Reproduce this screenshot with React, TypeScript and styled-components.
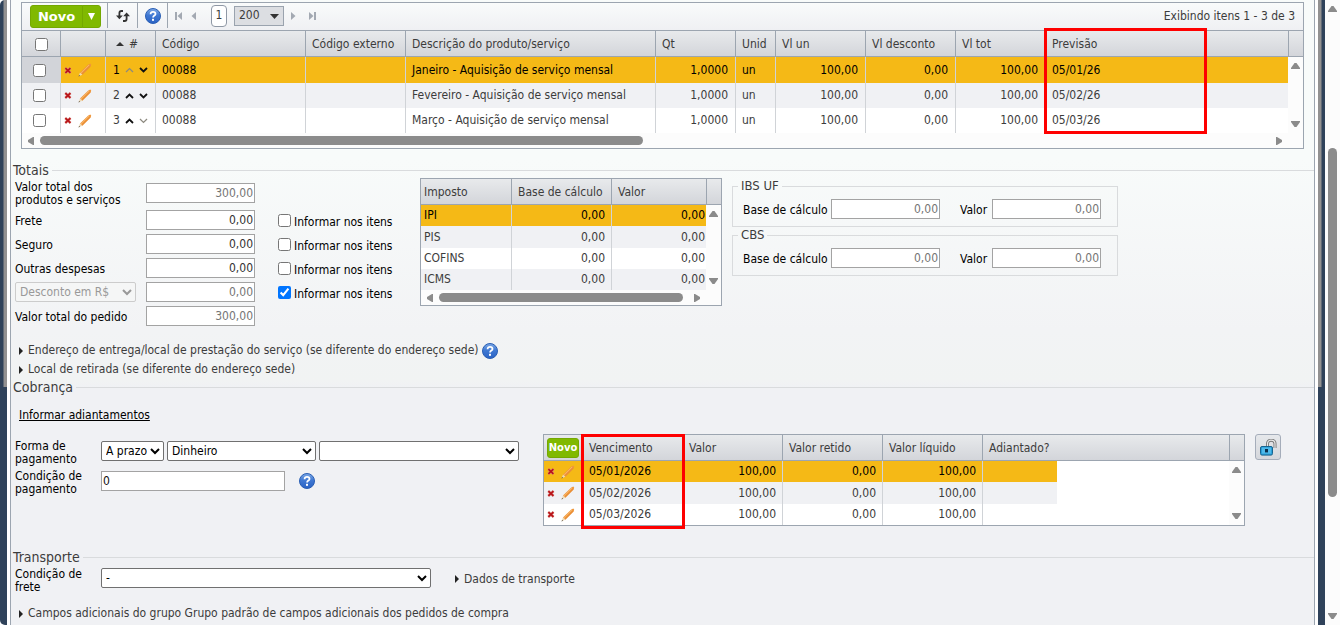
import React from 'react';
import styled, { createGlobalStyle } from 'styled-components';

const FONT = '"DejaVu Sans Condensed", "DejaVu Sans", Verdana, sans-serif';
const LINE = '#9ca5b0';
const AMBER = '#f5b916';
const TEXT = '#3c3c3c';

const Global = createGlobalStyle`
  *, *::before, *::after { box-sizing: border-box; }
  html, body { margin: 0; background: #fff; }
  body { overflow: hidden; font: 12px/13px ${FONT}; color: ${TEXT}; }
  input, select, button { font: inherit; margin: 0; }
`;

/* ---------- page frame ---------- */

const Page = styled.div`
  display: flex;
  min-height: 100vh;
`;

const Rail = styled.div<{ $side: 'left' | 'right' }>`
  flex: none;
  width: 7px;
  background: linear-gradient(to ${p => p.$side}, #929191 3px, transparent 4px) 0 0 / 100% 387px no-repeat, #2f425a;
  border-radius: ${p => (p.$side === 'left' ? '5px 0 0 5px' : '0')};
`;

const Sheet = styled.main`
  flex: 1;
  min-width: 0;
  margin: 0 3px;
  border: solid ${LINE};
  border-width: 0 1px;
  background: linear-gradient(#f8fbfa 160px, #f2f3f5 330px, #f1f3f3 380px, #f0f1f4 388px);
`;

const PageScroll = styled.div`
  flex: none;
  width: 15px;
  display: flex;
  flex-direction: column;
  align-items: center;
  padding: 6px 0;
  background: #fcfcfc;
`;

const PageThumb = styled.div`
  flex: none;
  width: 9px;
  height: 57%;
  margin: 136px 0 auto;
  border-radius: 5px;
  background: #8b8b8b;
`;

/* ---------- small drawings ---------- */

const Glyph = styled.svg`
  display: block;
  flex: none;
`;

const arrows = {
  up: '0,6 0,5 3.5,0 5.5,0 9,5 9,6',
  down: '0,0 9,0 9,1 5.5,6 3.5,6 0,1',
  left: '6,0 6,8 5,8 0,5 0,3 5,0',
  right: '0,0 1,0 6,3 6,5 1,8 0,8',
};

const Arrow = ({ dir }: { dir: keyof typeof arrows }) => {
  const vertical = dir === 'up' || dir === 'down';
  return (
    <Glyph width={vertical ? 9 : 6} height={vertical ? 6 : 8} aria-hidden="true">
      <polygon points={arrows[dir]} fill="#8b8b8b" />
    </Glyph>
  );
};

const HelpIcon = () => (
  <Glyph width="16" height="16" viewBox="0 0 16 16" aria-hidden="true">
    <defs>
      <linearGradient id="helpFill" x1="0" y1="0" x2="0" y2="1">
        <stop offset="0" stopColor="#7ea9e6" />
        <stop offset="0.45" stopColor="#4079d3" />
        <stop offset="1" stopColor="#2a62c4" />
      </linearGradient>
    </defs>
    <circle cx="8" cy="8" r="7.5" fill="url(#helpFill)" stroke="#2a5fb4" />
    <path d="M5.6 6.2C5.6 4.6 6.6 3.8 8 3.8s2.5.8 2.5 2.1c0 1.6-2.4 1.7-2.4 3.5" fill="none" stroke="#fff" strokeWidth="1.8" />
    <rect x="7" y="10.8" width="2" height="2" fill="#fff" />
  </Glyph>
);

const DeleteIcon = () => (
  <Glyph width="8" height="7" viewBox="0 0 8 7" aria-hidden="true">
    <path d="M1.2 1L6.6 6M6.6 1L1.2 6" stroke="#d9867c" strokeWidth="2.4" />
    <path d="M1.4 1.2L6.4 5.8M6.4 1.2L1.4 5.8" stroke="#b9141a" strokeWidth="1.6" />
  </Glyph>
);

const PencilIcon = () => (
  <Glyph width="14" height="14" viewBox="0 0 14 14" aria-hidden="true">
    <path d="M2 9.5L10.3 1.4 12.3 .6 13.2 1.4 12.6 3.4 4.4 11.8z" fill="#f0983c" />
    <path d="M2.9 10L11 2" stroke="#f8b468" strokeWidth="1" />
    <path d="M4 11.3L12.4 3" stroke="#df8330" strokeWidth=".7" />
    <path d="M2 9.5L.6 13.3 4.4 11.8z" fill="#ecd9b4" />
    <path d="M1.1 11.9L.5 13.4 2 12.8z" fill="#4a4136" />
  </Glyph>
);

const Chevron = ({ up, dim }: { up?: boolean; dim?: boolean }) => (
  <Glyph width="9" height="6" viewBox="0 0 9 6" aria-hidden="true">
    <path d={up ? 'M1 5L4.5 1.6 8 5' : 'M1 1L4.5 4.4 8 1'} fill="none" stroke={dim ? '#8d8a80' : '#111'} strokeWidth={dim ? 1.3 : 1.8} />
  </Glyph>
);

const RefreshIcon = () => (
  <Glyph width="14" height="12" viewBox="0 0 14 12" aria-hidden="true">
    <path d="M7 1H5.4Q3.4 1 3.4 3V6.5" fill="none" stroke="#333" strokeWidth="1.8" />
    <path d="M0 5.4H6.8L3.4 9.2z" fill="#333" />
    <path d="M7 11H8.6Q10.6 11 10.6 9V5" fill="none" stroke="#333" strokeWidth="1.8" />
    <path d="M7.2 6.2H14L10.6 2.4z" fill="#333" />
  </Glyph>
);

const PagerIcon = ({ next, edge }: { next?: boolean; edge?: boolean }) => (
  <Glyph width={edge ? 7 : 5} height="8" viewBox={edge ? '0 0 7 8' : '0 0 5 8'} aria-hidden="true">
    {edge && <rect x={next ? 5 : 0} y="0" width="2" height="8" fill="#a3a9b2" />}
    {next ? <path d="M0 0L4.5 4 0 8z" fill="#a3a9b2" /> : <path d={edge ? 'M7 0L2.5 4 7 8z' : 'M5 0L.5 4 5 8z'} fill="#a3a9b2" />}
  </Glyph>
);

const SortIcon = () => (
  <Glyph width="8" height="4" aria-hidden="true">
    <path d="M0 4L4 0 8 4z" fill="#333" />
  </Glyph>
);

const DisclosureIcon = () => (
  <Glyph width="4" height="8" aria-hidden="true">
    <path d="M0 0L4 4 0 8z" fill="#222" />
  </Glyph>
);

const UnlockIcon = () => (
  <Glyph width="17" height="17" viewBox="0 0 17 17" aria-hidden="true">
    <path d="M7.5 8V4.8C7.5 2.3 9 1.2 11 1.2s4 1.1 4 3.6V9" fill="none" stroke="#777" strokeWidth="3" />
    <path d="M7.5 8V4.8C7.5 2.3 9 1.2 11 1.2s4 1.1 4 3.6V9" fill="none" stroke="#e8e8e8" strokeWidth="1.2" />
    <rect x=".5" y="7.5" width="12" height="8.6" rx="1.5" fill="#2a9fd8" stroke="#17648f" />
    <rect x="2" y="8.6" width="9" height="6" fill="#4fb9ea" />
    <rect x="5" y="10" width="3" height="3.4" fill="#0b2f4c" />
  </Glyph>
);

/* ---------- buttons ---------- */

const IconButton = styled.button`
  display: inline-flex;
  align-items: center;
  justify-content: center;
  padding: 0;
  border: 0;
  background: none;
  color: inherit;
`;

const NewButton = styled.button<{ $small?: boolean }>`
  display: flex;
  align-items: center;
  justify-content: center;
  height: ${p => (p.$small ? 20 : 23)}px;
  width: ${p => (p.$small ? 32 : 53)}px;
  padding: 0;
  border: 1px solid #74a800;
  border-radius: ${p => (p.$small ? '3px' : '3px 0 0 3px')};
  background: #80b900;
  color: #fff;
  font: bold ${p => (p.$small ? 10 : 13)}px/16px "DejaVu Sans", Verdana, sans-serif;
`;

const NewMenuButton = styled(NewButton)`
  width: 19px;
  margin-left: -1px;
  border-radius: 0 3px 3px 0;
`;

const LockButton = styled(IconButton)`
  flex: none;
  width: 26px;
  height: 26px;
  margin-left: 10px;
  border: 1px solid #a5adba;
  border-radius: 3px;
  background: linear-gradient(#e6e8eb, #d5d7dc);
`;

/* ---------- grids ---------- */

const Panel = styled.section`
  border: 1px solid ${LINE};
  background: #fcfcfc;
`;

const ItemsPanel = styled(Panel)`
  position: relative;
  margin: 2px 10px 0;
`;

const TaxPanel = styled(Panel)`
  flex: 0 0 302px;
`;

const DuePanel = styled(Panel)`
  position: relative;
  flex: 0 1 702px;
  min-width: 0;
  margin-left: 24px;
`;

const Toolbar = styled.div`
  display: flex;
  align-items: center;
  height: 28px;
  padding: 0 8px;
  border-bottom: 1px solid ${LINE};
  background: linear-gradient(#f9fbfb, #eff0f3);
`;

const ToolSlot = styled.div`
  display: flex;
  align-items: center;
  justify-content: center;
  width: 30px;
  height: 25px;
  border-left: 1px solid ${LINE};
`;

const ToolSlots = styled.div`
  display: flex;
  align-self: flex-start;
  margin-left: 6px;
`;

const Pager = styled.nav`
  display: flex;
  align-items: center;
  align-self: flex-start;
  height: 25px;
  padding-left: 6px;
  border-left: 1px solid ${LINE};
`;

const PagerStep = styled(IconButton)`
  width: 19px;
  height: 16px;
  &:first-child { width: 8px; margin-right: 2px; }
`;

const PageNumber = styled.button`
  width: 16px;
  height: 22px;
  margin: 0 7px 0 8px;
  padding: 0;
  border: 1px solid #8f98a5;
  border-radius: 4px;
  background: #fff;
  color: ${TEXT};
`;

const SizeSelect = styled.select`
  appearance: none;
  width: 50px;
  height: 20px;
  padding: 0 4px;
  border: 1px solid #9aa3ae;
  border-radius: 0;
  background: #dcdee2;
  color: ${TEXT};
`;

const SizeBox = styled.div`
  position: relative;
  display: flex;
  svg { position: absolute; right: 5px; top: 8px; pointer-events: none; }
`;

const Count = styled.span`
  margin-left: auto;
`;

const GridBody = styled.div`
  display: flex;
`;

const Table = styled.table`
  flex: 1;
  width: 0;
  min-width: 0;
  table-layout: fixed;
  border-collapse: separate;
  border-spacing: 0;
  background: #fff;
`;

const headFill = 'linear-gradient(#e8eaec, #d3d5da)';

const Th = styled.th<{ $pad?: number }>`
  height: 26px;
  padding: 1px ${p => p.$pad ?? 6}px 0;
  border-right: 1px solid ${LINE};
  border-bottom: 1px solid ${LINE};
  background: ${headFill};
  font-weight: normal;
  text-align: left;
  white-space: nowrap;
  &:last-child { border-right: 0; }
`;

const Td = styled.td<{ $right?: boolean; $pad?: number }>`
  padding: 0 ${p => p.$pad ?? 6}px;
  border-right: 1px solid #d0d3d7;
  text-align: ${p => (p.$right ? 'right' : 'left')};
  white-space: nowrap;
  &:last-child { border-right: 0; }
`;

const Tr = styled.tr<{ $height: number; $selected?: boolean }>`
  height: ${p => p.$height}px;
  ${p => p.$selected && 'color: #000;'}
  &:nth-child(even) ${Td} { background: #f0f1f4; }
  ${p => p.$selected && `& ${Td} { background: ${AMBER}; }`}
`;

const CheckTd = styled(Td)`
  ${Tr}:first-child &&& { background: #d2d4d9; }
`;

const PlainTd = styled(Td)`
  ${Tr} &&& { background: #fff; }
`;

const EndTd = styled(Td)`
  border-right: 0;
`;

const CenterBox = styled.div<{ $shift?: boolean }>`
  display: flex;
  justify-content: center;
  padding-right: ${p => (p.$shift ? 4 : 0)}px;
`;

const CellRow = styled.div<{ $gap: number }>`
  display: flex;
  align-items: center;
  gap: ${p => p.$gap}px;
`;

const Check = styled.input`
  width: 13px;
  height: 13px;
  flex: none;
`;

const SideTrack = styled.div`
  flex: none;
  width: 15px;
  display: flex;
  flex-direction: column;
  background: #fcfcfc;
`;

const SideCap = styled.div`
  height: 26px;
  border-left: 1px solid ${LINE};
  border-bottom: 1px solid ${LINE};
  background: ${headFill};
`;

const SideArrows = styled.div`
  flex: 1;
  display: flex;
  flex-direction: column;
  align-items: center;
  justify-content: space-between;
  padding: 6px 0;
`;

const SideScroll = () => (
  <SideTrack>
    <SideCap />
    <SideArrows>
      <Arrow dir="up" />
      <Arrow dir="down" />
    </SideArrows>
  </SideTrack>
);

const BottomTrack = styled.div`
  display: flex;
  align-items: center;
  gap: 6px;
  height: 15px;
  padding: 0 21px 0 6px;
`;

const BottomLane = styled.div`
  flex: 1;
`;

const BottomThumb = styled.div<{ $share: number }>`
  width: ${p => p.$share}%;
  height: 9px;
  border-radius: 5px;
  background: #8b8b8b;
`;

const BottomScroll = ({ share }: { share: number }) => (
  <BottomTrack>
    <Arrow dir="left" />
    <BottomLane>
      <BottomThumb $share={share} />
    </BottomLane>
    <Arrow dir="right" />
  </BottomTrack>
);

const Mark = styled.div<{ $left: number; $top: number; $width: number; $height: number }>`
  position: absolute;
  left: ${p => p.$left}px;
  top: ${p => p.$top}px;
  width: ${p => p.$width}px;
  height: ${p => p.$height}px;
  border: 3px solid #fe0000;
  pointer-events: none;
`;

const RowActions = () => (
  <CellRow $gap={6}>
    <IconButton type="button" aria-label="Excluir"><DeleteIcon /></IconButton>
    <IconButton type="button" aria-label="Editar"><PencilIcon /></IconButton>
  </CellRow>
);

/* ---------- form pieces ---------- */

const SectionTitle = styled.h2<{ $top?: number }>`
  display: flex;
  align-items: center;
  gap: 3px;
  height: 16px;
  margin: ${p => p.$top ?? 0}px 0 0;
  padding-left: 2px;
  font-size: 14px;
  line-height: 16px;
  font-weight: normal;
  &::after {
    content: '';
    flex: 1;
    height: 1px;
    background: #d9dbdd;
  }
`;

const FlowRow = styled.div<{ $top?: number }>`
  display: flex;
  align-items: flex-start;
  margin-top: ${p => p.$top ?? 0}px;
  padding-left: 4px;
`;

const Label = styled.label`
  color: #000;
`;

const TotalsGrid = styled.div`
  flex: 0 0 405px;
  display: grid;
  grid-template-columns: 131px 109px 1fr;
  grid-template-rows: 26px repeat(5, 20px);
  row-gap: 4px;
  align-items: center;
  padding-top: 2px;
  > ${Label} { padding-top: 2px; }
`;

const TextBox = styled.input<{ $dim?: boolean; $left?: boolean; $width?: number }>`
  width: ${p => p.$width ?? 109}px;
  height: 20px;
  padding: 0 1px;
  border: 1px solid #a3a3a3;
  border-radius: 0;
  background: #fff;
  color: ${p => (p.$dim ? '#757575' : p.$left ? '#111' : '#333')};
  text-align: ${p => (p.$left ? 'left' : 'right')};
`;

const Select = styled.select<{ $width: number }>`
  width: ${p => p.$width}px;
  height: 20px;
  padding: 0;
  border: 1px solid #707070;
  border-radius: 2px;
  background: #fff;
  color: #000;
  &:disabled { background: #f5f6f6; color: #999; border-color: #ccc; opacity: 1; }
`;

const Option = styled.label`
  grid-column: 3;
  display: flex;
  align-items: center;
  gap: 3px;
  height: 20px;
  margin-left: 23px;
  color: #000;
  span { padding-top: 4px; }
`;

const TaxBoxes = styled.div`
  flex: none;
  margin-left: 10px;
`;

const TaxBox = styled.fieldset`
  display: flex;
  align-items: center;
  width: 386px;
  margin: 0;
  padding: 5px 16px 7px 10px;
  border: 1px solid #d9dbdd;
  legend {
    margin-left: -5px;
    padding: 0 3px;
    font-size: 13px;
    line-height: 16px;
  }
`;

const BoxLabel = styled(Label)<{ $width: number }>`
  width: ${p => p.$width}px;
  padding-top: 2px;
  & ~ & { margin-left: 20px; }
`;

const Disclosure = styled.div<{ $top?: number }>`
  display: flex;
  align-items: center;
  gap: 3px;
  height: 19px;
  margin-top: ${p => p.$top ?? 0}px;
  padding-left: 8px;
`;

const DisclosureButton = styled(IconButton)`
  gap: 5px;
  white-space: nowrap;
`;

const AdvanceLink = styled.a`
  display: inline-block;
  margin: 12px 0 0 8px;
  line-height: 16px;
  color: #000;
`;

const PaymentGrid = styled.div`
  flex: none;
  width: 504px;
  display: grid;
  grid-template-columns: 86px 1fr;
  row-gap: 4px;
  align-items: start;
  padding-top: 6px;
`;

const Fields = styled.div<{ $gap: number }>`
  display: flex;
  gap: ${p => p.$gap}px;
  padding-top: 1px;
`;

const SideLabel = styled(Label)`
  width: 86px;
  span { display: block; width: 70px; }
`;

const InlineDisclosure = styled.div`
  display: flex;
  align-items: center;
  height: 22px;
  margin-left: 24px;
`;

/* ---------- data ---------- */

const items = ['Janeiro', 'Fevereiro', 'Março'].map((m, i) => ({ n: i + 1, text: `${m} - Aquisição de serviço mensal`, due: `05/0${i + 1}/26` }));
const itemHeights = [26, 25, 25];
const taxes = ['IPI', 'PIS', 'COFINS', 'ICMS'];
const compactHeights = [21, 22, 21, 21];
const dues = ['05/01/2026', '05/02/2026', '05/03/2026'];
const charges = [
  { id: 'frete', label: 'Frete' },
  { id: 'seguro', label: 'Seguro' },
  { id: 'outras', label: 'Outras despesas' },
];

const ItemsGrid = () => (
  <ItemsPanel>
    <Toolbar>
      <NewButton type="button">Novo</NewButton>
      <NewMenuButton type="button" aria-label="Mais opções">
        <Glyph width="7" height="7" aria-hidden="true"><path d="M0 0H7L3.5 7z" fill="#fff" /></Glyph>
      </NewMenuButton>
      <ToolSlots>
        <ToolSlot><IconButton type="button" aria-label="Atualizar"><RefreshIcon /></IconButton></ToolSlot>
        <ToolSlot><IconButton type="button" aria-label="Ajuda"><HelpIcon /></IconButton></ToolSlot>
      </ToolSlots>
      <Pager>
        <PagerStep type="button" aria-label="Primeira"><PagerIcon edge /></PagerStep>
        <PagerStep type="button" aria-label="Anterior"><PagerIcon /></PagerStep>
        <PageNumber type="button">1</PageNumber>
        <SizeBox>
          <SizeSelect aria-label="Itens por página"><option>200</option></SizeSelect>
          <Glyph width="9" height="5" aria-hidden="true"><path d="M0 0H9L4.5 5z" fill="#333" /></Glyph>
        </SizeBox>
        <PagerStep type="button" aria-label="Próxima"><PagerIcon next /></PagerStep>
        <PagerStep type="button" aria-label="Última"><PagerIcon next edge /></PagerStep>
      </Pager>
      <Count>Exibindo itens 1 - 3 de 3</Count>
    </Toolbar>
    <GridBody>
      <Table>
        <colgroup>
          {[39, 45, 50, 150, 100, 250, 80, 40, 90, 90, 90].map((w, i) => <col key={i} width={w} />)}
          <col />
        </colgroup>
        <thead>
          <tr>
            <Th $pad={0}><CenterBox><Check type="checkbox" aria-label="Selecionar todos" /></CenterBox></Th>
            <Th />
            <Th $pad={10}><CellRow $gap={5}><SortIcon />#</CellRow></Th>
            <Th>Código</Th>
            <Th>Código externo</Th>
            <Th>Descrição do produto/serviço</Th>
            <Th>Qt</Th>
            <Th>Unid</Th>
            <Th>Vl un</Th>
            <Th>Vl desconto</Th>
            <Th>Vl tot</Th>
            <Th>Previsão</Th>
          </tr>
        </thead>
        <tbody>
          {items.map((it, i) => (
            <Tr key={it.n} $height={itemHeights[i]} $selected={i === 0}>
              <CheckTd $pad={0}><CenterBox $shift><Check type="checkbox" aria-label={`Selecionar item ${it.n}`} /></CenterBox></CheckTd>
              <Td $pad={3}><RowActions /></Td>
              <Td $pad={7}>
                <CellRow $gap={5}>
                  {it.n}
                  <IconButton type="button" aria-label="Subir"><Chevron up dim={i === 0} /></IconButton>
                  <IconButton type="button" aria-label="Descer"><Chevron dim={i === 2} /></IconButton>
                </CellRow>
              </Td>
              <Td>00088</Td>
              <Td />
              <Td>{it.text}</Td>
              <Td $right $pad={7}>1,0000</Td>
              <Td>un</Td>
              <Td $right $pad={7}>100,00</Td>
              <Td $right $pad={7}>0,00</Td>
              <Td $right $pad={7}>100,00</Td>
              <Td>{it.due}</Td>
            </Tr>
          ))}
        </tbody>
      </Table>
      <SideScroll />
    </GridBody>
    <BottomScroll share={49} />
    <Mark $left={1022} $top={25} $width={163} $height={106} />
  </ItemsPanel>
);

const TaxGrid = () => (
  <TaxPanel>
    <GridBody>
      <Table>
        <colgroup><col width={91} /><col width={100} /><col /></colgroup>
        <thead>
          <tr>
            <Th $pad={3}>Imposto</Th>
            <Th>Base de cálculo</Th>
            <Th>Valor</Th>
          </tr>
        </thead>
        <tbody>
          {taxes.map((t, i) => (
            <Tr key={t} $height={compactHeights[i]} $selected={i === 0}>
              <Td $pad={3}>{t}</Td>
              <Td $right>0,00</Td>
              <Td $right $pad={1}>0,00</Td>
            </Tr>
          ))}
        </tbody>
      </Table>
      <SideScroll />
    </GridBody>
    <BottomScroll share={98} />
  </TaxPanel>
);

const DueGrid = () => (
  <DuePanel>
    <GridBody>
      <Table>
        <colgroup>
          {[39, 100, 100, 100, 100, 74].map((w, i) => <col key={i} width={w} />)}
          <col />
        </colgroup>
        <thead>
          <tr>
            <Th $pad={3}><NewButton type="button" $small>Novo</NewButton></Th>
            <Th>Vencimento</Th>
            <Th>Valor</Th>
            <Th>Valor retido</Th>
            <Th>Valor líquido</Th>
            <Th colSpan={2}>Adiantado?</Th>
          </tr>
        </thead>
        <tbody>
          {dues.map((d, i) => (
            <Tr key={d} $height={compactHeights[i]} $selected={i === 0}>
              <Td $pad={3}><RowActions /></Td>
              <Td>{d}</Td>
              <Td $right>100,00</Td>
              <Td $right>0,00</Td>
              <Td $right>100,00</Td>
              <EndTd />
              <PlainTd />
            </Tr>
          ))}
        </tbody>
      </Table>
      <SideScroll />
    </GridBody>
    <Mark $left={37} $top={-1} $width={104} $height={95} />
  </DuePanel>
);

const BaseBox = ({ id, title }: { id: string; title: string }) => (
  <TaxBox>
    <legend>{title}</legend>
    <BoxLabel $width={88} htmlFor={`${id}-base`}>Base de cálculo</BoxLabel>
    <TextBox id={`${id}-base`} $dim readOnly value="0,00" />
    <BoxLabel $width={32} htmlFor={`${id}-valor`}>Valor</BoxLabel>
    <TextBox id={`${id}-valor`} $dim readOnly value="0,00" />
  </TaxBox>
);

const ItemOption = ({ checked }: { checked?: boolean }) => (
  <Option>
    <Check type="checkbox" defaultChecked={checked} />
    <span>Informar nos itens</span>
  </Option>
);

export default function App() {
  return (
    <>
      <Global />
      <Page>
        <Rail $side="left" />
        <Sheet>
          <ItemsGrid />

          <SectionTitle $top={13}>Totais</SectionTitle>
          <FlowRow>
            <TotalsGrid>
              <Label htmlFor="total-itens">Valor total dos<br />produtos e serviços</Label>
              <TextBox id="total-itens" $dim readOnly value="300,00" />
              <span />
              {charges.map(c => (
                <React.Fragment key={c.id}>
                  <Label htmlFor={c.id}>{c.label}</Label>
                  <TextBox id={c.id} defaultValue="0,00" />
                  <ItemOption />
                </React.Fragment>
              ))}
              <Select $width={121} disabled aria-label="Tipo de desconto"><option>Desconto em R$</option></Select>
              <TextBox $dim readOnly value="0,00" aria-label="Desconto" />
              <ItemOption checked />
              <Label htmlFor="total-pedido">Valor total do pedido</Label>
              <TextBox id="total-pedido" $dim readOnly value="300,00" />
            </TotalsGrid>
            <TaxGrid />
            <TaxBoxes>
              <BaseBox id="ibs" title="IBS UF" />
              <BaseBox id="cbs" title="CBS" />
            </TaxBoxes>
          </FlowRow>

          <Disclosure $top={15}>
            <DisclosureButton type="button"><DisclosureIcon />Endereço de entrega/local de prestação do serviço (se diferente do endereço sede)</DisclosureButton>
            <IconButton type="button" aria-label="Ajuda"><HelpIcon /></IconButton>
          </Disclosure>
          <Disclosure>
            <DisclosureButton type="button"><DisclosureIcon />Local de retirada (se diferente do endereço sede)</DisclosureButton>
          </Disclosure>

          <SectionTitle>Cobrança</SectionTitle>
          <AdvanceLink href="#adiantamentos">Informar adiantamentos</AdvanceLink>
          <FlowRow $top={11}>
            <PaymentGrid>
              <SideLabel htmlFor="forma"><span>Forma de pagamento</span></SideLabel>
              <Fields $gap={3}>
                <Select id="forma" $width={63}><option>A prazo</option></Select>
                <Select $width={149} aria-label="Meio de pagamento"><option>Dinheiro</option></Select>
                <Select $width={200} aria-label="Conta"><option> </option></Select>
              </Fields>
              <SideLabel htmlFor="condicao"><span>Condição de pagamento</span></SideLabel>
              <Fields $gap={14}>
                <TextBox id="condicao" $left $width={184} defaultValue="0" />
                <IconButton type="button" aria-label="Ajuda"><HelpIcon /></IconButton>
              </Fields>
            </PaymentGrid>
            <DueGrid />
            <LockButton type="button" aria-label="Desbloquear"><UnlockIcon /></LockButton>
          </FlowRow>

          <SectionTitle $top={23}>Transporte</SectionTitle>
          <FlowRow $top={3}>
            <SideLabel htmlFor="frete-cond"><span>Condição de frete</span></SideLabel>
            <Select id="frete-cond" $width={330}><option>-</option></Select>
            <InlineDisclosure>
              <DisclosureButton type="button"><DisclosureIcon />Dados de transporte</DisclosureButton>
            </InlineDisclosure>
          </FlowRow>
          <Disclosure $top={10}>
            <DisclosureButton type="button"><DisclosureIcon />Campos adicionais do grupo Grupo padrão de campos adicionais dos pedidos de compra</DisclosureButton>
          </Disclosure>
        </Sheet>
        <Rail $side="right" />
        <PageScroll>
          <Arrow dir="up" />
          <PageThumb />
          <Arrow dir="down" />
        </PageScroll>
      </Page>
    </>
  );
}
